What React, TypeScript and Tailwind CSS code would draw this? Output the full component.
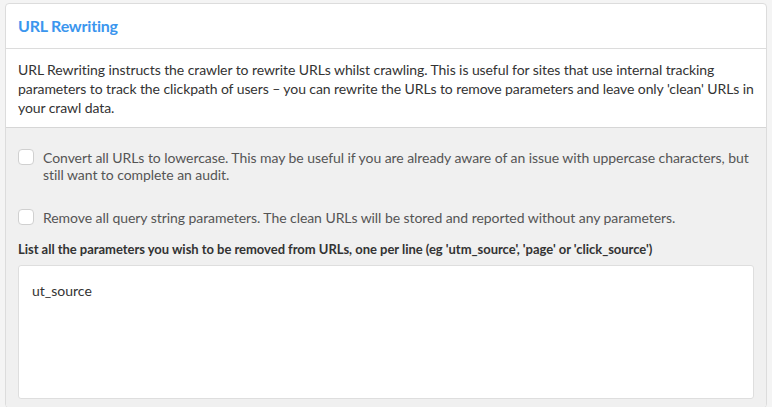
import { useState } from "react";

const options = [
  {
    id: "lowercase",
    label:
      "Convert all URLs to lowercase. This may be useful if you are already aware of an issue with uppercase characters, but still want to complete an audit.",
  },
  {
    id: "query",
    label: "Remove all query string parameters. The clean URLs will be stored and reported without any parameters.",
  },
];

export default function App() {
  const [checked, setChecked] = useState<Record<string, boolean>>({});
  const [params, setParams] = useState("ut_source");

  return (
    <div className="min-h-screen bg-[#f4f4f4] px-[5px] pt-[3px] font-['Lato','Liberation_Sans',sans-serif]">
      <div className="border border-[#dcdcdc] rounded-[4px] bg-white overflow-hidden">
        {/* Header */}
        <div className="h-[45px] px-[12px] flex items-center border-b border-[#dcdcdc]">
          <h1 className="text-[16px] font-bold text-[#3b96ee] tracking-[-0.2px]">URL Rewriting</h1>
        </div>

        {/* Description */}
        <div className="px-[12px] pt-[11px] pb-[10px] border-b border-[#d6d6d6]">
          <p className="text-[14px] leading-[19px] text-[#333] tracking-[-0.08px]">
            URL Rewriting instructs the crawler to rewrite URLs whilst crawling. This is useful for sites that use internal tracking parameters to track the clickpath of users – you can rewrite the URLs to remove parameters and leave only 'clean' URLs in your crawl data.
          </p>
        </div>

        {/* Options */}
        <div className="bg-[#f0f0f0] px-[12px] pt-[21px] pb-[8px]">
          <div className="flex flex-col gap-[26px]">
            {options.map(opt => (
              <label key={opt.id} className="flex items-start gap-[9px] cursor-pointer">
                <button
                  type="button"
                  onClick={() => setChecked(prev => ({ ...prev, [opt.id]: !prev[opt.id] }))}
                  className="w-[16px] h-[16px] shrink-0 rounded-[4px] border border-[#d0d0d0] bg-white"
                  aria-label={opt.id}
                >
                  {checked[opt.id] && <span className="block w-[8px] h-[8px] m-auto bg-[#3b96ee] rounded-[1px]" />}
                </button>
                <span className="text-[14px] leading-[17px] text-[#555] tracking-[-0.06px]">{opt.label}</span>
              </label>
            ))}
          </div>

          <div className="mt-[14px] text-[13px] font-bold text-[#333] leading-[18px] tracking-[-0.03px]">
            List all the parameters you wish to be removed from URLs, one per line (eg 'utm_source', 'page' or 'click_source')
          </div>

          <textarea
            value={params}
            onChange={e => setParams(e.target.value)}
            className="mt-[7px] block w-full h-[134px] resize-none rounded-[3px] border border-[#dedede] bg-white px-[13px] py-[16px] text-[14px] leading-[18px] text-[#333] outline-none"
          />
        </div>
      </div>
    </div>
  );
}
